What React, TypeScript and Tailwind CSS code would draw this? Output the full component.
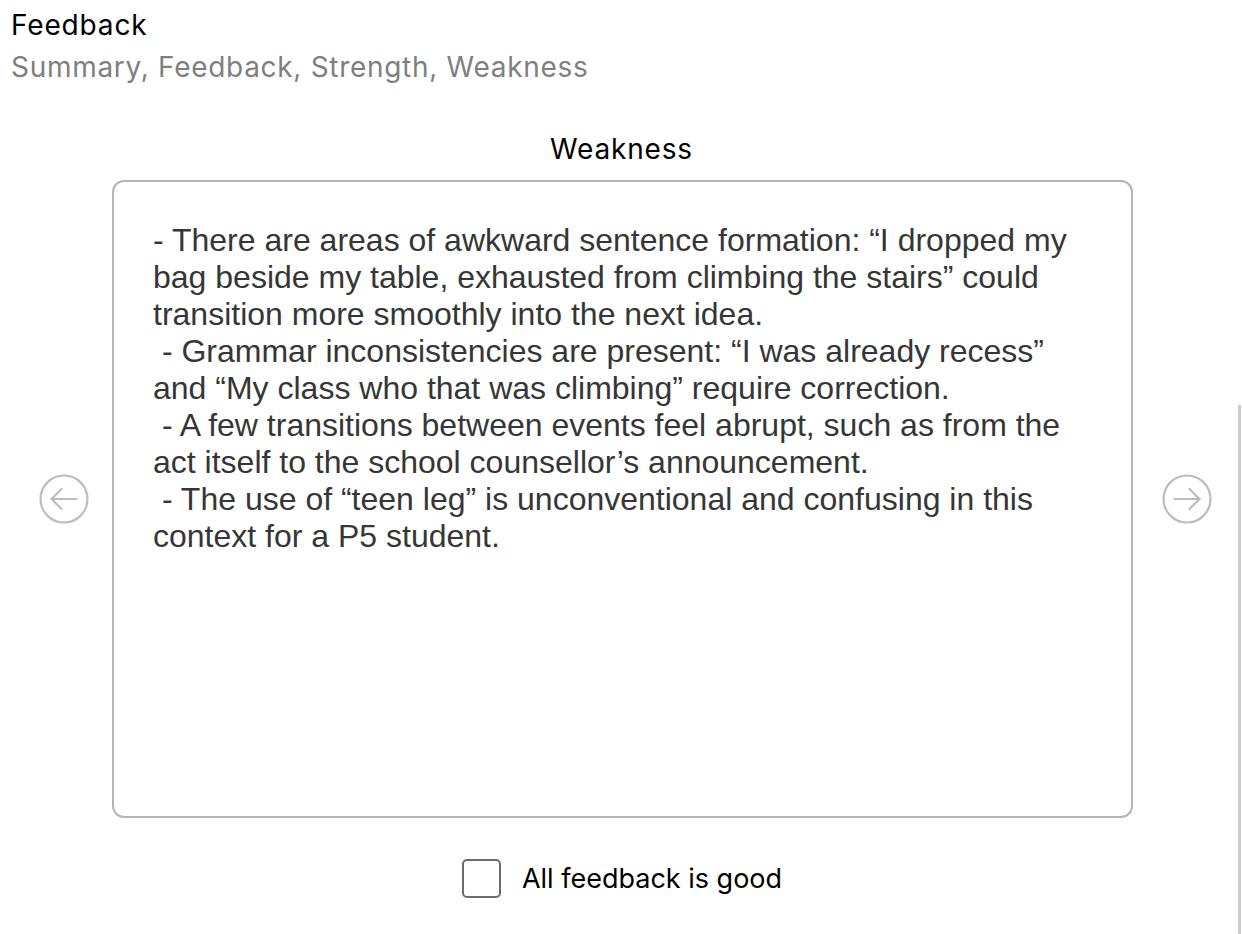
import React from "react";

const lines = [
  "- There are areas of awkward sentence formation: “I dropped my",
  "bag beside my table, exhausted from climbing the stairs” could",
  "transition more smoothly into the next idea.",
  " - Grammar inconsistencies are present: “I was already recess”",
  "and “My class who that was climbing” require correction.",
  " - A few transitions between events feel abrupt, such as from the",
  "act itself to the school counsellor’s announcement.",
  " - The use of “teen leg” is unconventional and confusing in this",
  "context for a P5 student.",
];

function CircleArrow({ dir }: { dir: "left" | "right" }) {
  return (
    <svg width="50" height="50" viewBox="0 0 50 50" fill="none" stroke="#bdbdbd" strokeWidth="2.2" strokeLinecap="round" strokeLinejoin="round">
      <circle cx="25" cy="25" r="23.5" />
      {dir === "left" ? (
        <>
          <path d="M37.5 25H12.5" />
          <path d="M22.5 15L12.5 25L22.5 35" />
        </>
      ) : (
        <>
          <path d="M12.5 25H37.5" />
          <path d="M27.5 15L37.5 25L27.5 35" />
        </>
      )}
    </svg>
  );
}

export default function App() {
  const poppins = { fontFamily: "Inter, 'Noto Sans', sans-serif" };
  return (
    <div className="relative h-[934px] w-full overflow-hidden bg-white">
      <div className="pl-[11px] pt-[7px]" style={poppins}>
        <div className="text-[28px] leading-[36px] text-black tracking-[0.03em]">Feedback</div>
        <div className="mt-[6px] text-[28px] leading-[36px] text-[#7f7f7f] tracking-[0.025em]">
          Summary, Feedback, Strength, Weakness
        </div>
      </div>

      <div
        className="mt-[46px] text-center text-[28px] leading-[36px] text-black tracking-[0.03em] pl-[1px]"
        style={poppins}
      >
        Weakness
      </div>

      <div className="mt-[13px] flex items-center pl-[39px]">
        <button className="flex h-[50px] w-[50px] items-center justify-center">
          <CircleArrow dir="left" />
        </button>
        <div className="ml-[23px] h-[638px] w-[1021px] rounded-[12px] border-2 border-[#b5b5b5] pl-[39px] pt-[40px]">
          <div
            className="whitespace-pre text-[32px] leading-[37px] text-[#363636]"
            style={{ fontFamily: "'Liberation Sans', Arial, sans-serif" }}
          >
            {lines.map((l, i) => (
              <div key={i}>{l}</div>
            ))}
          </div>
        </div>
        <button className="ml-[29px] flex h-[50px] w-[50px] items-center justify-center">
          <CircleArrow dir="right" />
        </button>
      </div>

      <div className="mt-[41px] flex items-center justify-center pl-[2px]">
        <div className="h-[39px] w-[39px] rounded-[5px] border-2 border-[#6b6b6b]" />
        <div className="ml-[21px] text-[27px] leading-[36px] text-black" style={poppins}>
          All feedback is good
        </div>
      </div>

      <div className="absolute right-[1px] top-[405px] bottom-0 w-[3px] bg-[#cccccc]" />
    </div>
  );
}
